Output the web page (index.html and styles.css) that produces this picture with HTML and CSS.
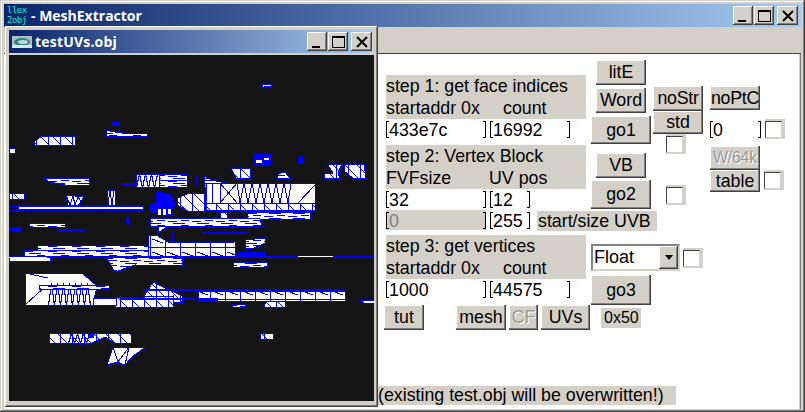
FILE: index.html
```html
<!DOCTYPE html>
<html lang="en">
<head>
<meta charset="utf-8">
<title>MeshExtractor</title>
<link rel="stylesheet" href="styles.css">
</head>
<body>
<div class="app">
  <div class="titlebar">
    <div class="appicon"><span class="ic-a">llex</span><span class="ic-b">2obj</span></div>
    <div class="title">- MeshExtractor</div>
    <div class="wbtns">
      <button class="wbtn"><span class="g-min"></span></button>
      <button class="wbtn"><span class="g-max"></span></button>
      <button class="wbtn close"><svg viewBox="0 0 12 12" width="12" height="12"><path d="M1 1L11 11M11 1L1 11" stroke="#000" stroke-width="2"/></svg></button>
    </div>
  </div>
  <div class="menuband"></div>
  <div class="client">
    <div class="col-left">
      <div class="lbl block"><div>step 1: get face indices</div><div class="sp-a"><span>startaddr 0x</span><span>count</span></div></div>
      <div class="irow"><div class="inp w100">433e7c</div><div class="inp w80">16992</div></div>
      <div class="lbl block gap5"><div>step 2: Vertex Block</div><div class="sp-b"><span>FVFsize</span><span>UV pos</span></div></div>
      <div class="irow"><div class="inp w100">32</div><div class="inp w40">12</div></div>
      <div class="irow"><div class="inp w100 dis">0</div><div class="inp w40">255</div><div class="lbl uvb">start/size UVB</div></div>
      <div class="lbl block gap4"><div>step 3: get vertices</div><div class="sp-a"><span>startaddr 0x</span><span>count</span></div></div>
      <div class="irow"><div class="inp w100">1000</div><div class="inp w80">44575</div></div>
      <div class="brow">
        <button class="btn b-tut">tut</button>
        <button class="btn b-mesh">mesh</button>
        <button class="btn b-cf off">CF</button>
        <button class="btn b-uvs">UVs</button>
      </div>
      <div class="lbl status">(existing test.obj will be overwritten!)</div>
    </div>
    <div class="col-mid">
      <div class="mid-top">
        <div class="sub-a">
          <button class="btn small lite">litE</button>
          <button class="btn small word">Word</button>
          <button class="btn big go1">go1</button>
          <button class="btn small vb">VB</button>
          <button class="btn big go2">go2</button>
        </div>
        <div class="sub-b">
          <button class="btn nostr tight">noStr</button>
          <button class="btn std">std</button>
          <span class="chk chk1"></span>
          <span class="chk chk2"></span>
        </div>
      </div>
      <div class="selrow">
        <div class="select"><span class="sel-text">Float</span><span class="sel-btn"><svg viewBox="0 0 8 5" width="8" height="5"><path d="M0 0H8L4 5Z" fill="#000"/></svg></span></div>
        <span class="chk"></span>
      </div>
      <button class="btn big go3">go3</button>
      <div class="lbl hex">0x50</div>
    </div>
    <div class="col-right">
      <button class="btn noptc tight">noPtC</button>
      <div class="zrow"><div class="inp w52">0</div><span class="chk"></span></div>
      <button class="btn w64 off">W/64k</button>
      <div class="trow"><button class="btn table">table</button><span class="chk"></span></div>
    </div>
  </div>

  <div class="child">
    <div class="ctitle">
      <svg class="cicon" viewBox="0 0 20 12" width="20" height="12"><rect width="20" height="12" fill="#a9bfc2"/><ellipse cx="10" cy="6" rx="8" ry="4" fill="#2f8089"/><ellipse cx="11" cy="6" rx="5" ry="2" fill="#c6d6d8"/><path d="M0 9H20V12H0Z" fill="#dbe6e6"/></svg>
      <div class="title ctext">testUVs.obj</div>
      <div class="wbtns">
        <button class="wbtn"><span class="g-min"></span></button>
        <button class="wbtn"><span class="g-max"></span></button>
        <button class="wbtn close"><svg viewBox="0 0 12 12" width="12" height="12"><path d="M1 1L11 11M11 1L1 11" stroke="#000" stroke-width="2"/></svg></button>
      </div>
    </div>
    <svg class="mesh" viewBox="9 55 365 346" width="365" height="346" shape-rendering="crispEdges">
      <defs>
        <pattern id="tri" width="12" height="12" patternUnits="userSpaceOnUse"><rect width="12" height="12" fill="#fff"/><path d="M0 0L12 12M0 0V12" fill="none" stroke="#00f"/></pattern>
        <pattern id="rows" width="24" height="5" patternUnits="userSpaceOnUse"><rect width="24" height="5" fill="#fff"/><path d="M0 1H9M13 0H21M5 3H17" fill="none" stroke="#00f"/></pattern>
        <pattern id="cells" width="15" height="13" patternUnits="userSpaceOnUse"><rect width="15" height="13" fill="#fff"/><path d="M0 0V13M0 0H15M2 5L13 9" fill="none" stroke="#00f"/></pattern>
      </defs>
      <g class="wire">
        <rect x="262" y="84" width="9" height="3" fill="url(#rows)"/>
        <polygon points="106,130 115,132 130,134 147,133 147,137 106,136" fill="url(#rows)"/>
        <polygon points="34,145 34,142 42,136 75,136 75,145" fill="url(#tri)"/>
        <rect x="9" y="148" width="6" height="5"/>
        <polygon points="231,168 250,169 250,178 240,179 236,178" fill="url(#tri)"/>
        <polygon points="277,178 280,172 285,172 290,178" fill="url(#rows)"/>
        <polygon points="327,164 342,164 338,173 340,178 324,178 325,174 333,173" fill="url(#tri)"/>
        <polygon points="344,164 364,164 366,178 353,178 345,172" fill="url(#tri)"/>
        <polygon points="43,178 89,178 89,186 65,185 50,182" fill="url(#rows)"/>
        <rect x="136" y="174" width="51" height="6" fill="url(#rows)"/>
        <rect x="136" y="180" width="51" height="7" fill="url(#rows)"/>
        <rect x="136" y="174" width="23" height="13" fill="#fff"/>
        <path class="zz" d="M136.5 187.5l3-13l3 13l3-13l3 13l3-13l3 13l3-13"/>
        <polygon points="204,176 212,180 230,184 230,187 204,187" fill="url(#rows)"/>
        <rect x="206" y="183" width="109" height="20" fill="#fff"/>
        <path d="M206 183V203M212 183V203M220 183V203M220 183L237 203M237 183L220 203"/>
        <path d="M237 183l3 20l4-20l4 20l4-20l4 20l4-20l4 20l4-20l4 20l4-20l4 20l4-20l4 20l3-20"/>
        <path d="M298 203L315 185"/>
        <rect x="206" y="203" width="109" height="7" fill="url(#tri)"/>
        <rect x="9" y="193" width="15" height="6" fill="url(#tri)"/>
        <polygon points="66,195 84,197 78,206 68,205" fill="#fff"/>
        <path d="M66 195l4 10l3-9l2 9l3-8l3 4"/>
        <rect x="107" y="190" width="8" height="15" fill="#fff"/>
        <path d="M108 205l2-15l2 15l2-15"/>
        <polygon points="177,198 190,193 205,194 205,211 190,212 177,205" fill="url(#tri)"/>
        <rect x="220" y="212" width="7" height="8" fill="url(#tri)"/>
        <rect x="247" y="212" width="63" height="7" fill="url(#rows)"/>
        <rect x="18" y="205" width="125" height="4"/>
        <polygon points="158,233 158,225 170,225" fill="url(#tri)"/>
        <polygon points="150,218 260,219 262,226 150,226" fill="url(#rows)"/>
        <rect x="29" y="223" width="36" height="4" fill="url(#rows)"/>
        <polygon points="148,235 156,235 170,243 235,242 235,257 148,257" fill="url(#cells)"/>
        <rect x="37" y="245" width="111" height="6" fill="url(#rows)"/>
        <rect x="24" y="250" width="124" height="7" fill="url(#rows)"/>
        <polygon points="245,240 265,238 265,243 252,249 245,248" fill="url(#rows)"/>
        <rect x="9" y="256" width="41" height="5"/>
        <polygon points="106,257 182,258 182,266 135,265 115,272" fill="url(#rows)"/>
        <rect x="233" y="262" width="34" height="5" fill="url(#rows)"/>
        <polygon points="25,273 82,273 97,286 93,305 25,305" fill="#fff"/>
        <path d="M25 305L47 285M25 273L48 278"/>
        <path class="zz" d="M48.5 305.5l3-22l3 22l3-22l3 22l3-22l3 22l3-22l3 22l3-22l3 22l3-22l3 22l3-22l3 22"/>
        <rect x="39" y="285" width="70" height="4" fill="url(#rows)"/>
        <polygon points="143,298 153,282 182,296 182,302 143,302" fill="url(#tri)"/>
        <rect x="198" y="291" width="147" height="10" fill="url(#cells)"/>
        <polygon points="115,298 173,296 173,307 115,307" fill="url(#tri)"/>
        <rect x="93" y="298" width="23" height="7"/>
        <rect x="232" y="304" width="13" height="3" fill="url(#rows)"/>
        <polygon points="264,307 266,301 285,302 285,307" fill="url(#tri)"/>
        <polygon points="360,300 374,301 374,303 364,303" />
        <polygon points="49,333 131,333 131,343 115,343 105,337 92,343 49,343" fill="url(#tri)"/>
        <path class="zz" d="M68.5 343.5l3-10l3 10l3-10l3 10l3-10l3 10l3-10"/>
        <polygon points="260,333 274,333 273,339 260,339" fill="url(#tri)"/>
        <polygon points="107,365 113,347 146,347 133,356 125,365 117,362" fill="#fff"/>
        <path d="M113 347L118 362L129 347L125 365M118 362L107 365"/>
      </g>
      <g class="solid">
        <rect x="112" y="122" width="8" height="4"/>
        <rect x="254" y="154" width="17" height="12"/>
        <polygon points="297,164 299,155 303,155 304,164"/>
        <rect x="122" y="183" width="14" height="3"/>
        <rect x="196" y="176" width="2" height="9"/>
        <rect x="9" y="206" width="134" height="1"/>
        <rect x="9" y="210" width="134" height="1"/>
        <polygon points="150,203 156,203 156,192 170,193 176,205 170,213 176,216 150,212"/>
        <polygon points="126,217 129,217 131,225 126,223"/>
        <rect x="9" y="227" width="12" height="4"/>
        <rect x="58" y="229" width="27" height="2"/>
        <rect x="203" y="232" width="44" height="2"/>
        <rect x="172" y="232" width="1" height="10"/>
        <rect x="237" y="252" width="28" height="5"/>
        <rect x="9" y="256" width="365" height="2"/>
        <rect x="143" y="289" width="202" height="2"/>
        <rect x="198" y="298" width="20" height="3"/>
        <rect x="120" y="298" width="75" height="2"/>
        <rect x="88" y="334" width="6" height="4"/>
      </g>
      <g class="hole">
        <rect x="256" y="160" width="6" height="3"/>
        <rect x="264" y="158" width="5" height="2"/>
        <rect x="158" y="209" width="3" height="6"/>
        <rect x="163" y="209" width="3" height="6"/>
        <rect x="168" y="209" width="3" height="5"/>
        <rect x="298" y="256" width="35" height="1"/>
        <rect x="9" y="257" width="38" height="1"/>
      </g>
    </svg>
  </div>
</div>
</body>
</html>
```
FILE: styles.css
```css
* { box-sizing: border-box; }
html, body { margin: 0; padding: 0; width: 805px; height: 412px; overflow: hidden; }
body { font-family: "Liberation Sans", Arial, sans-serif; font-size: 17.8px; color: #000; background: #d4d0c8; }

.app {
  position: relative;
  width: 805px;
  height: 412px;
  padding: 4px 4px 4px 4px;
  background: #d4d0c8;
  box-shadow: inset -1px -1px #404040, inset 1px 1px #d4d0c8, inset -2px -2px #808080, inset 2px 2px #fff;
  display: flex;
  flex-direction: column;
}

.titlebar {
  height: 23px;
  flex: none;
  display: flex;
  align-items: center;
  background: linear-gradient(90deg, #0a246a, #a6caf0);
  padding-right: 3px;
}
.appicon {
  width: 20px;
  height: 22px;
  margin-left: 3px;
  display: flex;
  flex-direction: column;
  font-family: "DejaVu Sans Mono", monospace;
  font-size: 9px;
  line-height: 10px;
  color: #17e8d8;
  overflow: hidden;
}
.ic-a, .ic-b { display: block; white-space: nowrap; letter-spacing: -0.5px; }
.title {
  font-family: "Open Sans", "Noto Sans", sans-serif;
  font-weight: 700;
  font-size: 14px;
  color: #fff;
  margin-left: 4px;
  white-space: nowrap;
}
.wbtns { margin-left: auto; display: flex; gap: 0; }
.wbtn {
  width: 20px;
  height: 19px;
  padding: 0;
  border: 0;
  position: relative;
  background: #d4d0c8;
  box-shadow: inset -1px -1px #404040, inset 1px 1px #fff, inset -2px -2px #808080;
  display: flex;
  align-items: center;
  justify-content: center;
}
.wbtn + .wbtn { margin-left: 1px; }
.wbtn.close { margin-left: 3px; width: 21px; }
.g-min { width: 8px; height: 2px; background: #000; margin: 10px 3px 0 0; }
.g-max { width: 13px; height: 12px; border: 1px solid #000; border-top-width: 2px; }

.menuband { height: 27px; flex: none; border-bottom: 1px solid #404040; margin-left: 0; }

.client {
  flex: 1;
  background: #fff;
  margin-right: 1px;
  margin-bottom: -1px;
  display: flex;
  align-items: flex-start;
  padding-left: 380px;
  border-right: 1px solid #d4d0c8;
  box-shadow: 1px 0 #808080;
  overflow: hidden;
}

.child {
  position: absolute;
  left: 5px;
  top: 26px;
  width: 373px;
  height: 381px;
  padding: 4px 4px 5px 4px;
  background: #d4d0c8;
  box-shadow: inset -1px -1px #404040, inset 1px 1px #fff, inset -2px -2px #808080;
  display: flex;
  flex-direction: column;
}
.ctitle {
  height: 23px;
  margin-right: 2px;
  flex: none;
  display: flex;
  align-items: center;
  background: linear-gradient(90deg, #0a246a, #a6caf0);
}
.cicon { margin-left: 3px; flex: none; }
.ctext { margin-left: 3px; letter-spacing: 0.2px; }
.mesh { display: block; margin-top: 2px; background: #141414; flex: none; }
.wire * { stroke: #00f; stroke-width: 1; }
.wire rect:not([fill]), .wire polygon:not([fill]) { fill: #fff; }
.wire path { fill: none; }
.wire .zz { stroke-width: 1.2; }
.solid * { fill: #00f; }
.hole * { fill: #fff; }

/* form */
.col-left { width: 207px; flex: none; padding: 21px 0 0 2px; }
.lbl { background: #d4d0c8; white-space: nowrap; }
.block { width: 200px; height: 44px; line-height: 22px; }
.gap5 { margin-top: 5px; }
.gap4 { margin-top: 4px; }
.sp-a, .sp-b { display: flex; }
.sp-a span:first-child { width: 117px; }
.sp-b span:first-child { width: 103px; }
.irow { display: flex; gap: 4px; height: 21px; }
.inp {
  position: relative;
  height: 20px;
  line-height: 22px;
  padding-left: 3px;
  background: #fff;
  flex: none;
}
.inp::before, .inp::after {
  content: "";
  position: absolute;
  top: 2px;
  bottom: 1px;
  width: 2px;
  border: 1px solid #000;
}
.inp::before { left: 0; border-right: 0; }
.inp::after { right: 0; border-left: 0; }
.w100 { width: 100px; }
.w80 { width: 80px; }
.w40 { width: 40px; }
.w52 { width: 51px; }
.inp.dis { background: #d4d0c8; color: #808080; }
.uvb { height: 20px; line-height: 20px; margin: 1px 0 0 3px; padding-left: 1px; width: 120px; flex: none; }

.btn {
  padding: 0;
  border: 0;
  background: #d4d0c8;
  font: 17.8px "Liberation Sans", Arial, sans-serif;
  color: #000;
  box-shadow: inset -1px -1px #404040, inset -2px -2px #808080, inset 1px 1px #fff;
  display: block;
}
.btn.off { color: #9a9a9a; text-shadow: 1px 1px #fff; }
.tight { letter-spacing: -0.3px; }

.brow { display: flex; margin: 5px 0 0 -2px; height: 25px; }
.brow .btn { height: 25px; }
.b-tut { width: 40px; }
.b-mesh { width: 50px; margin-left: 32px; }
.b-cf { width: 29px; margin-left: 3px; }
.b-uvs { width: 49px; margin-left: 3px; }
.status { width: 298px; height: 19px; line-height: 19px; margin: 56px 0 0 -8px; }

.col-mid { width: 118px; flex: none; display: flex; flex-direction: column; align-items: flex-start; }
.mid-top { display: flex; height: 190px; }
.sub-a { width: 62px; padding-top: 6px; display: flex; flex-direction: column; }
.small { width: 50px; height: 25px; margin-left: 5px; }
.big { width: 60px; height: 28px; }
.word { margin-top: 3px; }
.go1 { margin-top: 3px; }
.vb { margin-top: 9px; }
.go2 { margin-top: 2px; height: 29px; }
.sub-b { width: 50px; padding-top: 32px; display: flex; flex-direction: column; }
.nostr { width: 50px; height: 25px; }
.std { width: 50px; height: 23px; }
.chk {
  display: block;
  flex: none;
  width: 20px;
  height: 20px;
  background: #d4d0c8;
  position: relative;
}
.chk::before {
  content: "";
  position: absolute;
  left: 0;
  top: 2px;
  width: 15px;
  height: 15px;
  background: #fff;
  border: 1px solid;
  border-color: #404040 #d4d0c8 #d4d0c8 #404040;
}
.chk1 { margin-left: 13px; }
.chk2 { margin: 31px 0 0 13px; }
.selrow { display: flex; align-items: center; gap: 3px; height: 27px; }
.select {
  width: 89px;
  height: 27px;
  background: #fff;
  display: flex;
  border: 2px solid;
  border-color: #808080 #d4d0c8 #d4d0c8 #808080;
  outline: 0;
}
.sel-text { flex: 1; line-height: 23px; padding-left: 1px; font-size: 18px; }
.sel-btn {
  width: 19px;
  background: #d4d0c8;
  box-shadow: inset -1px -1px #404040, inset 1px 1px #fff, inset -2px -2px #808080;
  display: flex;
  align-items: center;
  justify-content: center;
}
.go3 { margin-top: 4px; height: 30px; }
.hex { width: 40px; height: 20px; line-height: 20px; margin: 3px 0 0 10px; padding-left: 3px; font-size: 16px; }

.col-right { width: 76px; flex: none; padding-top: 32px; display: flex; flex-direction: column; margin-left: 0; }
.noptc { width: 50px; height: 24px; margin-left: 1px; }
.zrow { display: flex; gap: 4px; margin: 9px 0 0 1px; height: 27px; }
.w64 { width: 50px; height: 24px; margin-left: 1px; font-size: 16px; letter-spacing: -0.3px; }
.trow { display: flex; gap: 4px; margin-left: 1px; }
.table { width: 50px; height: 22px; }
```
